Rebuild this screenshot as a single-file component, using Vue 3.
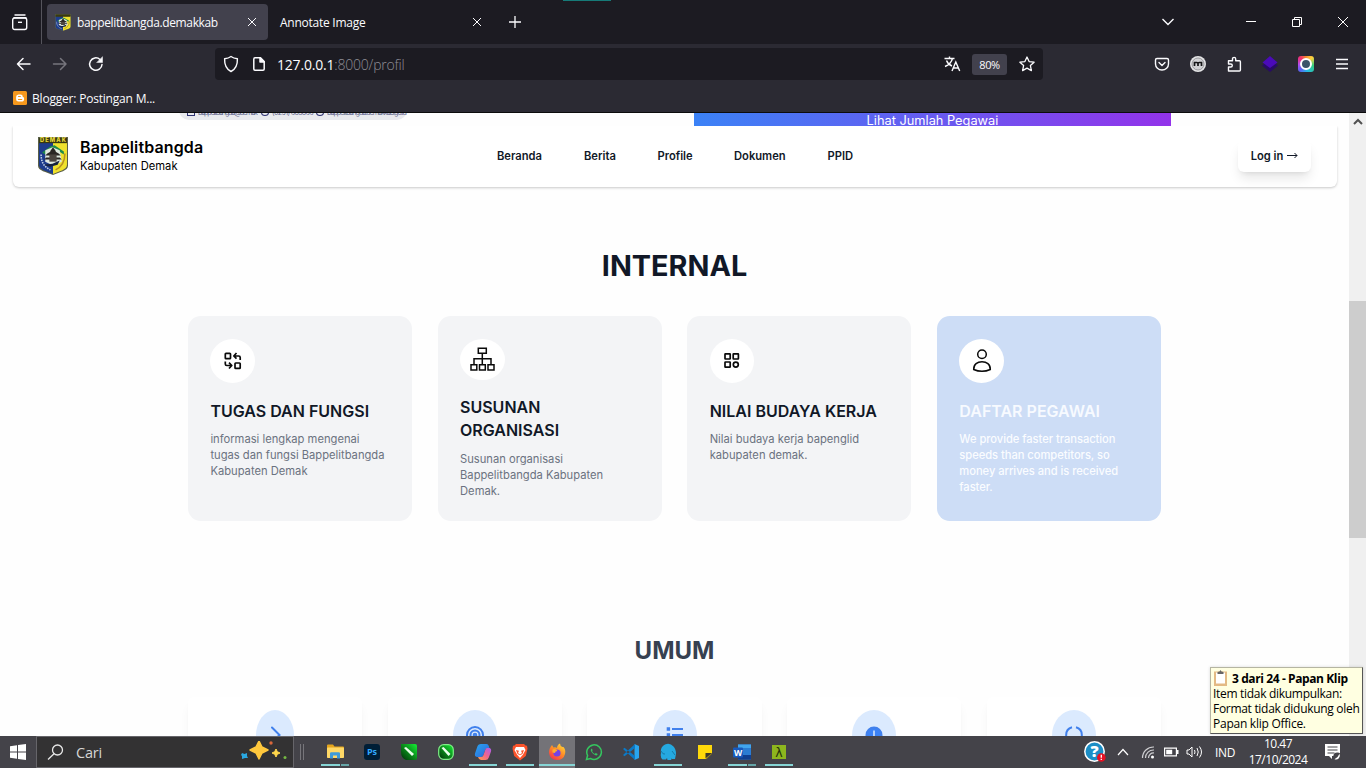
<script setup>
const menu = [
  { label: 'Beranda', w: 87 },
  { label: 'Berita', w: 73.5 },
  { label: 'Profile', w: 76.5 },
  { label: 'Dokumen', w: 93.5 },
  { label: 'PPID', w: 40 },
]
const internal = [
  { icon: 'swap', title: 'TUGAS DAN FUNGSI', lines: ['informasi lengkap mengenai', 'tugas dan fungsi Bappelitbangda', 'Kabupaten Demak'] },
  { icon: 'tree', title: 'SUSUNAN ORGANISASI', lines: ['Susunan organisasi', 'Bappelitbangda Kabupaten', 'Demak.'] },
  { icon: 'grid', title: 'NILAI BUDAYA KERJA', lines: ['Nilai budaya kerja bapenglid', 'kabupaten demak.'] },
  { icon: 'user', title: 'DAFTAR PEGAWAI', lines: ['We provide faster transaction', 'speeds than competitors, so', 'money arrives and is received', 'faster.'] },
]
const umum = ['chevron', 'radar', 'list', 'info', 'ring']
const apps = [
  { id: 'explorer', open: true, multi: true },
  { id: 'ps' },
  { id: 'corel' },
  { id: 'corel2' },
  { id: 'copilot', open: true },
  { id: 'brave', open: true },
  { id: 'firefox', open: true, active: true },
  { id: 'whatsapp' },
  { id: 'vscode' },
  { id: 'laragon', open: true },
  { id: 'notes' },
  { id: 'word', open: true, multi: true },
  { id: 'lambda', open: true },
]
</script>

<template>
  <div class="screen">
    <svg class="defs" width="0" height="0">
      <defs>
        <linearGradient id="cop" x1="0" y1="0" x2="1" y2="1">
          <stop offset="0" stop-color="#28a6f2" /><stop offset="1" stop-color="#2f62d8" />
        </linearGradient>
        <linearGradient id="cop2" x1="0" y1="1" x2="1" y2="0">
          <stop offset="0" stop-color="#ffa14a" /><stop offset=".5" stop-color="#f0648c" /><stop offset="1" stop-color="#a95df0" />
        </linearGradient>
        <linearGradient id="ff" x1=".9" y1="0" x2=".2" y2="1">
          <stop offset="0" stop-color="#ffe03a" /><stop offset=".5" stop-color="#ff8a26" /><stop offset="1" stop-color="#f5304f" />
        </linearGradient>
        <linearGradient id="cdr" x1="0" y1="1" x2="1" y2="0">
          <stop offset="0" stop-color="#022d08" /><stop offset=".5" stop-color="#0a8a1a" /><stop offset="1" stop-color="#15f235" />
        </linearGradient>
        <g id="crest">
          <path d="M0 0h29v28c0 5-8 6-14.500 9C8 34 0 33 0 28z" fill="#5a5f48" />
          <path d="M1 5h13.500v31C8 33 1 32 1 27z" fill="#1d3c8c" />
          <path d="M14.500 5H28v22c0 5-7 6-13.500 9z" fill="#f0e22c" />
          <path d="M1 1h27v5H1z" fill="#39390f" />
          <path d="M4 15l8-6 4-1 9 6v3l-8-5-4 1-6 4z" fill="#1f8a4a" />
          <path d="M7 13l7-3 7 3 2 11-8 4-8-4z" fill="#dfe8df" />
          <path d="M14.500 10l3 4h-6zM9 16l5.500-3 5.500 3 2 2H7zM8 20h13l2 2H6z" fill="#2a2624" />
          <path d="M11 17h7v7h-7z" fill="#4b4540" />
          <path d="M5 27l9-1 7-3-2 4-7 2z" fill="#16223d" />
          <path d="M3 17c0 8 3 12 9 15" fill="none" stroke="#c9d6ea" stroke-width="1.500" stroke-dasharray="1.500 1" />
          <path d="M26 16c0 8-3 13-9 16" fill="none" stroke="#b78f22" stroke-width="1.500" />
        </g>
      </defs>
    </svg>

    <header class="tabs">
      <div class="shelf">
        <svg width="18" height="18" viewBox="0 0 18 18" fill="none" stroke="#fbfbfe" stroke-width="1.400">
          <path d="M4 2h10M3 4.800h12" stroke-linecap="round" /><rect x="1.700" y="5" width="14" height="11.500" rx="2" /><path d="M7 9.300h4" />
        </svg>
      </div>
      <div class="tab on">
        <svg width="16" height="17" viewBox="0 0 29 37" preserveAspectRatio="none"><use href="#crest" /></svg>
        <span class="tab-t t1">bappelitbangda.demakkab</span>
        <svg class="x" width="10" height="10" viewBox="0 0 10 10" stroke="#fbfbfe" stroke-width="1"><path d="M1 1l8 8M9 1L1 9" /></svg>
      </div>
      <div class="tab">
        <span class="tab-t t2">Annotate Image</span>
        <svg class="x" width="10" height="10" viewBox="0 0 10 10" stroke="#fbfbfe" stroke-width="1"><path d="M1 1l8 8M9 1L1 9" /></svg>
      </div>
      <svg class="plus" width="12" height="12" viewBox="0 0 12 12" stroke="#fbfbfe" stroke-width="1.300"><path d="M6 0v12M0 6h12" /></svg>
      <i class="teal"></i>
      <div class="win">
        <svg width="14" height="10" viewBox="0 0 14 10" fill="none" stroke="#fbfbfe" stroke-width="1.400"><path d="M1.500 2L7 7.500 12.500 2" /></svg>
        <svg width="10" height="10" viewBox="0 0 10 10" stroke="#fff"><path d="M0 4.500h10" /></svg>
        <svg width="10" height="10" viewBox="0 0 10 10" fill="none" stroke="#fff"><path d="M.5 2.500h7v7h-7zM2.500 2.500v-2h7v7h-2" /></svg>
        <svg width="10" height="10" viewBox="0 0 10 10" stroke="#fff"><path d="M0 0l10 10M10 0L0 10" /></svg>
      </div>
    </header>

    <div class="toolbar">
      <svg class="nav-i" width="90" height="16" viewBox="0 0 90 16" fill="none" stroke="#fbfbfe" stroke-width="1.500" stroke-linecap="round" stroke-linejoin="round">
        <path d="M14 8H1.500M7 2.500L1.500 8 7 13.500" />
        <path d="M36 8h12.500M43 2.500L48.500 8 43 13.500" stroke="#77767e" transform="translate(1.500 0)" />
        <g transform="translate(3.500 0)"><path d="M82.500 8.500A6.200 6.200 0 1 1 80.500 3.500" /><path d="M83 1v5.500h-5.500z" fill="#fbfbfe" stroke-width=".5" /></g>
      </svg>
      <div class="url">
        <svg width="16" height="18" viewBox="0 0 16 18" fill="none" stroke="#fbfbfe" stroke-width="1.400" stroke-linejoin="round"><path d="M8 1.500c2 1.500 4 2 6.400 2.300C14.600 9 13 14 8 16.500 3 14 1.400 9 1.600 3.800 4 3.500 6 3 8 1.500z" /></svg>
        <svg class="doc" width="12" height="14" viewBox="0 0 12 14" fill="none" stroke="#fbfbfe" stroke-width="1.500" stroke-linejoin="round"><path d="M.8 2.200Q.8.800 2 .8h5.500l3.700 3.700v7.500q0 1.200-1.200 1.200H2Q.8 13.200.8 12z" /><path d="M7 .8v4.200h4.200z" fill="#fbfbfe" /></svg>
        <span class="addr">127.0.0.1<em>:8000/profil</em></span>
        <svg class="tr" width="17" height="16" viewBox="0 0 17 16" fill="none" stroke="#fbfbfe" stroke-width="1.400"><path d="M.5 2.500h10M5.500.5v2M8.500 2.500Q7 8 1 10.500M2.500 4.500Q4 8.500 8 10M8 15l3.800-9 3.900 9M9.300 12h5" /></svg>
        <span class="zoom">80%</span>
        <svg width="16" height="16" viewBox="0 0 16 16" fill="none" stroke="#fbfbfe" stroke-width="1.300" stroke-linejoin="round"><path d="M8 1l2.100 4.600 5 .6-3.700 3.400 1 5L8 12.100l-4.400 2.500 1-5L.9 6.200l5-.6z" /></svg>
      </div>
      <div class="ext">
        <svg width="16" height="16" viewBox="0 0 16 16" fill="none" stroke="#fbfbfe" stroke-width="1.400" stroke-linecap="round" stroke-linejoin="round"><path d="M3 2.500h10q1.500 0 1.500 1.500v4A6.500 6 0 0 1 1.500 8V4Q1.500 2.500 3 2.500z" /><path d="M5 6.500l3 3 3-3" /></svg>
        <svg width="16" height="16" viewBox="0 0 16 16"><circle cx="8" cy="8" r="8" fill="#e4e4e6" /><circle cx="8" cy="8" r="6" fill="#d0d0d3" stroke="#98989c" /><path d="M4.500 10V6.500h2.300q1.200 0 1.200 1 0-1 1.200-1h2.300V10M8 7v3" fill="none" stroke="#161618" stroke-width="1.700" /></svg>
        <svg width="16" height="16" viewBox="0 0 16 16" fill="none" stroke="#fbfbfe" stroke-width="1.400" stroke-linejoin="round"><path d="M2.500 15V11h2.300a1.500 1.500 0 0 0 0-3H2.500V4.700h4V3a1.600 1.600 0 0 1 3.200 0v1.700h3.700q1 0 1 1V14q0 1-1 1z" /></svg>
        <svg width="16" height="16" viewBox="0 0 16 16"><path d="M8 3l8 6.500L8 16 0 9.500z" fill="#280b66" /><path d="M8 0l7.500 6.500L8 12 .5 6.500z" fill="#4a0bb8" /></svg>
        <span class="cam"><i></i></span>
        <svg width="14" height="16" viewBox="0 0 14 16" stroke="#fbfbfe" stroke-width="1.300"><path d="M1 3.500h12M1 8h12M1 12.500h12" /></svg>
      </div>
    </div>
    <div class="bookmarks">
      <svg width="14" height="14" viewBox="0 0 14 14"><rect width="14" height="14" rx="1.500" fill="#f6981d" /><path d="M5.500 4.300h2q1.500 0 1.500 1.500 0 .7.500.7.800 0 .8 1v.4q0 1.900-1.900 1.900H5.600Q3.900 9.800 3.900 8.100V6Q3.900 4.300 5.500 4.300z" fill="#fff" stroke="#fff" stroke-width="1.600" /><path d="M5.500 5.500h1.800M5.500 8.500h3.200" stroke="#f6981d" stroke-width="1.200" stroke-linecap="round" /></svg>
      <span>Blogger: Postingan M...</span>
    </div>

    <div class="view">
      <main class="page">
        <div class="top-strip">
          <div class="contact"><i></i><b>bappelitbangda@demak</b><i class="r"></i><b class="w2">(0291) 685866</b><i class="r"></i><b class="w3">bappelitbangda.demakkab.go.id</b></div>
          <div class="cta">Lihat Jumlah Pegawai</div>
        </div>
        <nav class="navbar">
          <svg class="logo" width="30" height="38" viewBox="0 0 29 37" preserveAspectRatio="none"><use href="#crest" /><text x="14.500" y="5.300" text-anchor="middle" textLength="25" font-family="Inter" font-weight="800" font-size="5.500" fill="#e8da3c">DEMAK</text></svg>
          <div class="brand"><strong>Bappelitbangda</strong><span>Kabupaten Demak</span></div>
          <div class="menu"><a v-for="m in menu" :key="m.label" :style="{ width: m.w + 'px' }">{{ m.label }}</a></div>
          <button class="login">Log in <svg width="11" height="7" viewBox="0 0 11 7" fill="none" stroke="#111827"><path d="M0 3.500h10M7.500 1L10 3.500 7.500 6" /></svg></button>
        </nav>
        <h2 class="h-int">INTERNAL</h2>
        <section class="cards">
          <article v-for="c in internal" :key="c.icon" class="card" :class="c.icon">
            <div class="disc">
              <svg v-if="c.icon === 'swap'" width="20" height="20" viewBox="0 0 20 20" fill="none" stroke="#0a0a0a" stroke-width="1.700" stroke-linejoin="round"><rect x="2.300" y="2.300" width="5.200" height="5.400" rx=".7" /><rect x="12" y="12" width="5.200" height="5.400" rx=".7" /><path d="M17.200 9V6.500q0-1.500-1.500-1.500H11M13.500 2L10.800 5l2.700 2.700M2.300 10.500V13q0 1.500 1.500 1.500h4.800M6 11.700l2.800 2.800L6 17.500" /></svg>
              <svg v-else-if="c.icon === 'tree'" width="25" height="24" viewBox="0 0 25 24" fill="none" stroke="#0a0a0a" stroke-width="1.500"><path d="M8.300 1.200h8v5h-8zM12.300 6.200v11M4 17v-5.300h17V17M1 17.700h5.800V23H1zM9.500 17.700h5.800V23H9.500zM18 17.700h6V23h-6z" /></svg>
              <svg v-else-if="c.icon === 'grid'" width="20" height="20" viewBox="0 0 20 20" fill="none" stroke="#0a0a0a" stroke-width="1.700"><rect x="3" y="2.800" width="5.200" height="5.200" rx=".4" /><rect x="11.200" y="2.800" width="5.200" height="5.200" rx=".4" /><rect x="3" y="11" width="5.200" height="5.200" rx=".4" /><circle cx="13.800" cy="13.600" r="2.500" /></svg>
              <svg v-else width="20" height="24" viewBox="0 0 20 24" fill="none" stroke="#0a0a0a" stroke-width="1.500"><circle cx="10" cy="5.300" r="4.300" /><path d="M1.700 20.500C1.500 15 5.500 12.800 10 12.800s8.500 2.200 8.300 7.700q-4 1.800-8.300 1.800t-8.300-1.800z" /></svg>
            </div>
            <h3>{{ c.title }}</h3>
            <p><span v-for="l in c.lines" :key="l">{{ l }}</span></p>
          </article>
        </section>
        <h2 class="h-um">UMUM</h2>
        <section class="minis">
          <div v-for="u in umum" :key="u" class="mini">
            <div class="oval" :class="u">
              <svg width="22" height="22" viewBox="0 0 22 22" fill="none" stroke="#4080ec" stroke-width="2">
                <path v-if="u === 'chevron'" d="M8 3.500l7.500 7.500L8 18.500" stroke-linecap="round" />
                <g v-else-if="u === 'radar'"><circle cx="11" cy="11" r="8" /><circle cx="11" cy="11" r="4.500" /><circle cx="11" cy="11" r="1.300" /></g>
                <g v-else-if="u === 'list'"><path d="M8 5h11M8 11h11M8 17h11" /><path d="M2.700 5h3.400M2.700 11h3.400M2.700 17h3.400" stroke-width="3.400" /></g>
                <g v-else-if="u === 'info'"><circle cx="11" cy="11" r="7.500" fill="#3b82f6" /><path d="M11 6.500v7" stroke="#dbeafe" stroke-width="1.500" /></g>
                <g v-else><path d="M9 3.300a8 8 0 0 0 0 15.400M13 3.300a8 8 0 0 1 0 15.400" /></g>
              </svg>
            </div>
          </div>
        </section>
      </main>
      <aside class="scroll"><svg width="10" height="7" viewBox="0 0 10 7" fill="none" stroke="#505050" stroke-width="2"><path d="M1 6l4-4 4 4" /></svg><i></i></aside>
      <div class="tip">
        <div class="tip-h">
          <svg width="13" height="16" viewBox="0 0 13 16"><path d="M0 1.500h13V16H0z" fill="#e3ba85" /><path d="M2 2.500h9v11H2z" fill="#fff" /><path d="M3.500 4V2l2-.5L6.500 0l1 1.500 2 .5v2z" fill="#666" /></svg>
          <strong>3 dari 24 - Papan Klip</strong>
        </div>
        <span class="a">Item tidak dikumpulkan:</span><span class="b">Format tidak didukung oleh</span><span class="c">Papan klip Office.</span>
      </div>
    </div>

    <footer class="taskbar">
      <div class="start"><svg width="16" height="16" viewBox="0 0 16 16" fill="#fff"><path d="M0 2.300l7-1v6.300H0zM8 1.100L16 0v7.600H8zM0 8.500h7v6.300l-7-1zM8 8.500h8V16l-8-1.100z" /></svg></div>
      <div class="search">
        <svg width="17" height="16" viewBox="0 0 17 16" fill="none" stroke="#e8e8e8" stroke-width="1.300"><circle cx="10.500" cy="6" r="5" /><path d="M7 9.800L1 15.500" /></svg>
        <span>Cari</span>
        <svg class="spark" width="46" height="20" viewBox="0 0 46 20"><path d="M18 0l3 6 6 3-6 3-3 6-3-6-6-3 6-3z" fill="#ffc83d" stroke="#ffc83d" stroke-width="1.500" stroke-linejoin="round" /><path d="M35 8l1.300 2.700L39 12l-2.700 1.300L35 16l-1.300-2.700L31 12l2.700-1.300z" fill="#ffd64c" stroke="#ffd64c" /><path d="M1 12l2.500 1L6 12l0 3 1 2-3 0-3 1 0-3-1-1z" fill="#2aa7e0" /><circle cx="30" cy="2" r="1.700" fill="#d9673b" /><circle cx="44" cy="16.500" r="1.500" fill="#75b843" /></svg>
      </div>
      <div class="grip"></div>
      <div class="apps">
        <div v-for="a in apps" :key="a.id" class="app" :class="{ open: a.open, multi: a.multi, active: a.active }">
          <svg width="18" height="18" viewBox="0 0 18 18">
            <g v-if="a.id === 'explorer'"><path d="M1 2.500q0-1 1-1h5l1.500 2H17q1 0 1 1V9H1z" fill="#e5a51c" /><rect x="1" y="4.500" width="17" height="10.500" rx=".8" fill="#ffd866" /><path d="M4 15.500v-5q0-1.200 1.200-1.200h7.600Q14 9.300 14 10.500v5h-3v-3H7v3z" fill="#3f9bd8" /></g>
            <g v-else-if="a.id === 'ps'"><rect x="1" y="1" width="16" height="16" rx="3" fill="#001e36" /><text x="9" y="12" text-anchor="middle" font-family="Open Sans" font-weight="700" font-size="9" fill="#31a8ff">Ps</text></g>
            <g v-else-if="a.id === 'corel'"><path d="M1 1h14q2 0 2 2v12q0 2-2 2H6q-5-2-5-8z" fill="url(#cdr)" /><path d="M4 5l2-1 8 7-2 2z" fill="#eaffea" /></g>
            <g v-else-if="a.id === 'corel2'"><rect x="1.700" y="1.700" width="14.600" height="14.600" rx="5" fill="url(#cdr)" stroke="#80ef88" stroke-width="1.200" /><path d="M4.500 5l2-1 7 7-2 2z" fill="#eaffea" /></g>
            <g v-else-if="a.id === 'copilot'"><path d="M7 1h5.500q1.700 0 2.300 2l.7 2.500h-2.700q-1.300 0-1.700 1.500l-1.600 5q-.5 2-2.500 2H3Q.3 13.500 1 10.500L3.200 4Q4 1 7 1z" fill="url(#cop)" /><path d="M13 5h2.500q2.200.5 1.500 3.500l-2.200 6Q14 17 11.500 17H7q-2.200 0-3-3h3q2 0 2.500-2l1.700-5Q11.700 5 13 5z" fill="url(#cop2)" /></g>
            <g v-else-if="a.id === 'brave'"><path d="M5 1h8l1.500 1.500 1.500.3.500 3L14.800 13 9 17.500 3.200 13 1.500 5.800l.5-3 1.500-.3z" fill="#fb542b" /><path d="M5 4h8l1.500 3-2.500 4.500L9 15l-3-3.500L3.500 7z" fill="#fff" /><path d="M5 7l3 .8-1 2.200 2 1.500 2-1.500-1-2.200 3-.8-1.500 4-2.500 1.300L6.500 11z" fill="#fb542b" /></g>
            <g v-else-if="a.id === 'firefox'"><path d="M4 2l1.500 2.500Q8 4 9 5q0-3 3-4.500Q12 3 14.500 4l1 0Q18 7 17 11q-1.500 6-8 6Q2 17 1 10 1 5 4 2z" fill="url(#ff)" /><circle cx="9" cy="10" r="3.600" fill="#7542e5" /><path d="M4.500 6.500Q8 5 9.500 8 7 8 7 10l-2.500-.5z" fill="#ffad2e" /></g>
            <g v-else-if="a.id === 'whatsapp'" fill="none" stroke="#35c65f" stroke-width="1.500"><path d="M1.500 16.500l1.100-4A7.300 7.300 0 1 1 5.500 15.500z" /><path d="M6.300 5.500Q5 7 6.500 9q2 3 4.500 3.500 1.300 0 1.700-1.500l-2-1-.9 1Q7.700 10 7 8l.8-.9z" fill="#35c65f" stroke="none" /></g>
            <g v-else-if="a.id === 'vscode'"><path d="M12.500 1L17 3v12l-4.500 2z" fill="#29a5ee" /><path d="M1 6l1.500-1.300L13 13v4zM1 12l1.500 1.300L13 5V1z" fill="#0a7ac8" /></g>
            <g v-else-if="a.id === 'laragon'"><path d="M2 10Q1 4 6 1.500q5-2 8.500 2Q17 6 17 11l-1 5h-3v-1l-1 2H8.500L8 15l-1 1.500H3.500q-2.500-2-1.500-6.500z" fill="#25a9e0" /><path d="M2 8q2 4 4 3M13 8l3 4" fill="none" stroke="#157ba8" /></g>
            <g v-else-if="a.id === 'notes'"><path d="M2 2h14v8l-6 6H2z" fill="#ffd90a" /><path d="M9.500 15.500v-5.500h6.500z" fill="#3b382c" /><path d="M10 16l6-6v.8L10.800 16z" fill="#8a741a" /></g>
            <g v-else-if="a.id === 'word'"><path d="M5 1.500h13v15H5z" fill="#2b7cd3" /><path d="M5 1.500h13V5H5z" fill="#41a5ee" /><path d="M5 12h13v4.500H5z" fill="#103f91" /><rect y="4.500" width="10" height="10" rx="1" fill="#185abd" /><text x="5" y="12.500" text-anchor="middle" font-family="Open Sans" font-weight="700" font-size="8.500" fill="#fff">W</text></g>
            <g v-else><path d="M2 2h14v14H2z" fill="#8db61e" /><text x="9" y="13.500" text-anchor="middle" font-family="DejaVu Sans" font-size="12.500" fill="#26330a">λ</text></g>
          </svg>
        </div>
      </div>
      <div class="tray">
        <svg width="22" height="22" viewBox="0 0 22 22"><circle cx="10.500" cy="10.500" r="9.700" fill="#1c8ec6" stroke="#fff" stroke-width="1.500" /><text x="10.500" y="16.200" text-anchor="middle" font-family="Open Sans" font-weight="800" font-size="16" fill="#fff">?</text><circle cx="17.300" cy="16.500" r="4.300" fill="#e81123" /><path d="M17.300 13.800v3M17.300 17.800v1.200" stroke="#fff" stroke-width="1.300" /></svg>
        <svg class="up" width="12" height="8" viewBox="0 0 12 8" fill="none" stroke="#fff" stroke-width="1.200"><path d="M1 7l5-5.500L11 7" /></svg>
        <svg class="wifi" width="14" height="14" viewBox="0 0 14 14" fill="none" stroke="#cfcfd2" stroke-width="1.200"><path d="M1.500 13A11 11 0 0 1 13 2M4.500 13A8 8 0 0 1 13 5M7.500 13A5 5 0 0 1 13 8" /><circle cx="11.500" cy="12" r="1.500" fill="#fff" stroke="none" /></svg>
        <svg class="bat" width="15" height="10" viewBox="0 0 15 10"><path d="M.6 1.100h11.800v7.800H.6z" fill="none" stroke="#fff" stroke-width="1.200" /><path d="M2.200 2.700h6v4.600h-6zM13 3h1.500v4H13z" fill="#fff" /></svg>
        <svg class="vol" width="18" height="14" viewBox="0 0 18 14" fill="none" stroke="#fff" stroke-width="1"><path d="M1 5h2l3-3v10L3 9H1zM8.500 5q1 2 0 4M11 3q2.500 4 0 8M13.500 1.500q4 5.500 0 11" /></svg>
        <span class="lang">IND</span>
        <div class="clock"><span>10.47</span><span class="date">17/10/2024</span></div>
        <svg class="act" width="18" height="17" viewBox="0 0 18 17"><path d="M1 0h15v12h-8v3l-3-3H1z" fill="#fff" /><path d="M3.500 3h10M3.500 6h10M3.500 9h7" stroke="#454449" stroke-width="1.200" /><circle cx="13.300" cy="12.500" r="4" fill="#454449" /><path d="M10.500 15.300a4 4 0 0 0 5-5.500q-1 3-5 5.500z" fill="#fff" /></svg>
      </div>
    </footer>
  </div>
</template>

<style>
body { overflow: hidden; }
</style>
<style scoped>
* { box-sizing: border-box; }
svg { display: block; flex: none; }
.defs { position: absolute; }
.screen { width: 1366px; height: 768px; overflow: hidden; font-family: "Open Sans", "Noto Sans", sans-serif; background: #fff; position: relative; }
.tabs { height: 44px; background: #1c1b22; display: flex; align-items: center; position: relative; }
.shelf { width: 42px; height: 44px; border-right: 1px solid #55545c; display: flex; align-items: center; padding-left: 11px; }
.tab { width: 221px; height: 36px; border-radius: 4px; display: flex; align-items: center; color: #fbfbfe; font-size: 12px; padding: 2px 11px 0; margin-left: 3px; }
.tab.on { background: #42414d; margin-left: 5px; padding-left: 8px; }
.tab > svg { margin-top: -2px; }
.tab-t { white-space: nowrap; line-height: 20px; }
.tab.on .tab-t { margin-left: 6px; }
.t1 { letter-spacing: -.37px; }
.t2 { letter-spacing: -.25px; margin-left: -3px; }
.x { margin-left: auto; }
.tab:not(.on) { width: 222px; padding-left: 12px; }
.plus { margin-left: 16px; }
.teal { position: absolute; left: 563px; top: 0; width: 48px; height: 1px; background: #167a78; }
.win { margin-left: auto; display: flex; align-items: center; padding-right: 18px; }
.win svg:nth-child(2) { margin-left: 71px; }
.win svg:nth-child(3), .win svg:nth-child(4) { margin-left: 36px; }
.toolbar { height: 40px; background: #2b2a33; display: flex; align-items: center; padding: 0 17px 0 16px; }
.url { width: 828px; height: 32px; margin-left: 109px; background: #1c1b22; border-radius: 4px; display: flex; align-items: center; padding: 0 8px; color: #fbfbfe; }
.doc { margin-left: 14px; }
.addr { margin-left: 12px; font-size: 14px; letter-spacing: -.2px; white-space: nowrap; }
.addr em { font-style: normal; color: #8f8e96; font-weight: 300; }
.tr { margin-left: auto; }
.zoom { width: 35px; height: 21px; border-radius: 3px; background: #42414d; font-size: 11px; line-height: 22px; text-align: center; margin: 0 12px 0 11px; letter-spacing: -.4px; }
.ext { margin-left: auto; display: flex; align-items: center; gap: 20px; }
.ext > :last-child { margin-left: 1px; }
.cam { width: 16px; height: 16px; border-radius: 3px; display: grid; place-items: center; background: conic-gradient(#f58a2c, #ffd23f 12%, #35d07c 28%, #24b8e8 48%, #5a62f0 62%, #b44df0 74%, #f02e70 88%, #f58a2c); }
.cam i { width: 12px; height: 12px; border-radius: 50%; background: #3b5568; border: 2px solid #fff; }
.bookmarks { height: 29px; background: #2b2a33; border-bottom: 1px solid #0c0c0d; display: flex; align-items: center; padding-left: 13px; gap: 5px; color: #fbfbfe; font-size: 12px; letter-spacing: -.2px; }
.view { height: 623px; display: flex; position: relative; }
.page { width: 1349px; height: 623px; overflow: hidden; font-family: Inter, sans-serif; background: #fefefe; display: flex; flex-direction: column; }
.top-strip { height: 13px; flex: none; display: flex; overflow: hidden; padding-left: 179px; }
.contact { width: 228px; height: 20px; margin-top: -13px; background: #e9eaee; border-radius: 10px; display: flex; align-items: flex-end; padding: 0 0 3px 8px; font-size: 7.200px; line-height: 8px; color: #262a63; }
.contact i { width: 8px; height: 7px; border: 1.500px solid #2e3272; flex: none; margin-right: 3px; margin-bottom: 1px; }
.contact i.r { border-radius: 50%; }
.contact b { font-weight: 400; width: 63px; white-space: nowrap; opacity: .7; letter-spacing: -1.200px; flex: none; }
.contact .w2 { width: 44px; letter-spacing: -.700px; }
.contact .w3 { width: 72px; letter-spacing: -1.050px; }
.cta { margin-left: 287px; width: 477px; background: linear-gradient(90deg, #3b82f6, #9333ea); color: #fff; font-size: 12.800px; line-height: 15px; height: 13px; text-align: center; }
.navbar { flex: none; margin-left: 13px; width: 1324px; height: 61px; background: #fff; border-radius: 0 0 6px 6px; box-shadow: 0 1px 3px rgba(0,0,0,.14), 0 1px 2px rgba(0,0,0,.08); display: flex; align-items: center; padding: 0 26px 2px 24.500px; position: relative; clip-path: inset(0 -5px -6px -5px); }
.brand { margin-left: 12.500px; display: flex; flex-direction: column; color: #000; width: 200px; }
.brand strong { font-size: 16px; font-weight: 600; line-height: 20px; letter-spacing: .12px; }
.brand span { font-size: 11.200px; line-height: 18px; letter-spacing: .03px; }
.menu { margin-left: 217px; display: flex; }
.menu a { font-size: 11.200px; font-weight: 600; color: #111827; white-space: nowrap; }
.login { margin-left: auto; width: 73px; height: 32px; border: 0; background: #fff; border-radius: 6px; box-shadow: 0 8px 12px -2px rgba(0,0,0,.1), 0 3px 5px -3px rgba(0,0,0,.1); font: 600 11.200px Inter, sans-serif; color: #111827; padding: 0; display: flex; align-items: center; justify-content: center; gap: 4px; white-space: nowrap; }
h2 { margin: 0; text-align: center; flex: none; font-weight: 700; }
.h-int { margin-top: 61px; font-size: 28.800px; line-height: 36px; color: #111827; letter-spacing: 0; }
.cards { flex: none; margin: 32px 0 0 188px; width: 973px; display: grid; grid-template-columns: repeat(4, 1fr); grid-template-rows: 205px; gap: 25.600px; height: 205px; }
.card { background: #f3f4f6; border-radius: 12.800px; padding: 23px 22.400px 18px; }
.card.user { background: #cdddf6; }
.disc { width: 45px; height: 44px; border-radius: 50%; background: #fff; display: grid; place-items: center; }
.tree .disc { height: 41px; }
.tree .disc svg { margin-top: -1px; }
.grid .disc { width: 44px; }
h3 { margin: 17px 0 0; font-size: 16px; line-height: 23px; font-weight: 600; color: #111827; }
.tree h3 { margin-top: 16px; }
.card p { margin: 8px 0 0; font-size: 11.200px; line-height: 16px; color: #6b7280; letter-spacing: 0; }
.tree p { margin-top: 9px; }
.card p span { display: block; white-space: nowrap; }
.user h3 { color: #f7faff; }
.user p { color: #fafcff; font-weight: 500; letter-spacing: -.05px; }
.h-um { margin-top: 114px; font-size: 24px; line-height: 32px; color: #374151; }
.minis { flex: none; margin: 30px 0 0 188px; width: 973px; display: grid; grid-template-columns: repeat(5, 1fr); gap: 25.600px; height: 120px; }
.mini { background: #fff; border-radius: 6px; box-shadow: 0 8px 12px -2px rgba(0,0,0,.05), 0 3px 5px -2px rgba(0,0,0,.04); display: flex; justify-content: center; align-items: flex-start; padding-top: 13px; }
.oval { width: 44px; height: 51px; border-radius: 50%; background: #dbeafe; display: grid; place-items: center; }
.oval.chevron { width: 38px; }
.oval svg { margin-top: -2px; }
.scroll { width: 17px; background: #f0f0f0; display: flex; flex-direction: column; align-items: center; padding-top: 5px; }
.scroll i { width: 17px; height: 237px; background: #cdcdcd; margin-top: 176px; }
.tip { position: absolute; left: 1210px; top: 554px; width: 153px; height: 67px; background: #ffffe1; border: 1px solid #b5b5a2; border-right-color: #555; border-bottom-color: #555; box-shadow: 0 0 3px rgba(0,0,0,.15); padding: 2px; font-size: 12px; line-height: 15px; color: #000; display: flex; flex-direction: column; white-space: nowrap; }
.tip-h { display: flex; align-items: center; gap: 5px; height: 17px; padding-left: 1px; letter-spacing: -.4px; }
.tip .a, .tip .b { letter-spacing: -.3px; }
.tip .c { letter-spacing: -.25px; }
.taskbar { height: 32px; background: #444349; display: flex; align-items: center; color: #fff; }
.start { width: 36px; display: flex; justify-content: center; }
.search { width: 258px; height: 32px; background: #333233; border: 1px solid #66656a; display: flex; align-items: center; padding-left: 10px; font-size: 14.500px; color: #d6d6d6; }
.search span { margin-left: 12px; letter-spacing: -.2px; }
.spark { margin-left: auto; margin-right: 6px; margin-top: -2px; }
.grip { width: 4px; height: 16px; border: solid #77767b; border-width: 0 1px; margin-left: 6px; }
.apps { display: flex; gap: 1px; margin-left: 13px; }
.app { width: 36px; height: 32px; display: grid; place-items: center; padding-bottom: 1px; position: relative; }
.app.active { background: #747378; }
.app.open::after { content: ""; position: absolute; left: 4px; right: 4px; bottom: 2px; height: 2px; background: #86d5d5; }
.app.active::after { left: 0; right: 0; }
.app.multi::after { background: linear-gradient(90deg, #86d5d5 19px, #444349 19px, #444349 20px, #66a5a7 20px); }
.tray { margin-left: auto; display: flex; align-items: center; padding-right: 24px; }
.up { margin-left: 11px; }
.wifi { margin-left: 12px; }
.bat { margin-left: 9px; }
.vol { margin-left: 7px; }
.lang { font-size: 12px; margin-left: 11px; letter-spacing: -.3px; width: 22px; }
.clock { width: 60px; margin-left: 11px; display: flex; flex-direction: column; text-align: center; font-size: 12px; line-height: 16px; letter-spacing: -.5px; white-space: nowrap; }
.act { margin-left: 16px; }
</style>
